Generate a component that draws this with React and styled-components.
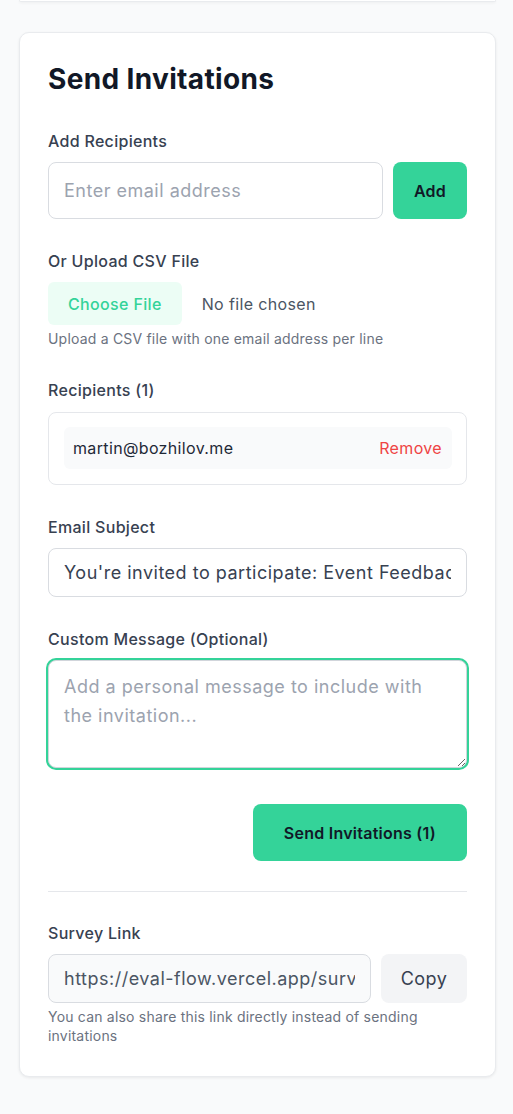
import React, { useState } from "react";
import styled, { createGlobalStyle } from "styled-components";

const GlobalStyle = createGlobalStyle`
  * { box-sizing: border-box; }
  body {
    margin: 0;
    background: #f9fafb;
    font-family: Inter, "Noto Sans", Arial, sans-serif;
    color: #111827;
  }
`;

const Page = styled.div`
  display: flex;
  flex-direction: column;
  padding: 0 17px 38px 19px;
`;

const PrevCard = styled.div`
  height: 2px;
  background: #fff;
  border: 1px solid #e9ebee;
  border-top: none;
  border-radius: 0 0 10px 10px;
  box-shadow: 0 1px 3px rgba(0, 0, 0, 0.06);
  margin-bottom: 30px;
`;

const Card = styled.div`
  background: #fff;
  border: 1px solid #e9ebee;
  border-radius: 10px;
  box-shadow: 0 1px 3px rgba(0, 0, 0, 0.07);
  padding: 28px 28px 31px;
  display: flex;
  flex-direction: column;
`;

const Title = styled.h2`
  margin: 0 0 32px;
  font-size: 28px;
  line-height: 36px;
  font-weight: 700;
  letter-spacing: 0.35px;
  color: #111827;
`;

const Section = styled.div`
  display: flex;
  flex-direction: column;
  margin-bottom: ${(p) => p.$mb ?? 30}px;
`;

const Label = styled.label`
  font-size: 16px;
  line-height: 24px;
  font-weight: 500;
  letter-spacing: 0.3px;
  color: #374151;
  margin-bottom: ${(p) => p.$mb ?? 9}px;
`;

const Row = styled.div`
  display: flex;
  gap: 10px;
`;

const TextInput = styled.input`
  flex: 1 1 auto;
  min-width: 0;
  height: ${(p) => p.$h || 49}px;
  padding: 0 15px;
  font-family: inherit;
  font-size: 18px;
  letter-spacing: 0.5px;
  color: ${(p) => (p.$muted ? "#4b5563" : "#374151")};
  background: ${(p) => (p.$muted ? "#f9fafb" : "#fff")};
  border: 1px solid #d9dce1;
  border-radius: 8px;
  outline: none;
  &::placeholder { color: #9ca3af; }
`;

const GreenButton = styled.button`
  height: ${(p) => p.$h || 57}px;
  padding: 0 ${(p) => p.$px || 22}px;
  background: #34d399;
  color: #111827;
  border: none;
  border-radius: 8px;
  font-family: inherit;
  font-size: 16px;
  font-weight: 600;
  letter-spacing: 0.25px;
  cursor: pointer;
`;

const GreyButton = styled.button`
  height: 49px;
  width: 86px;
  background: #f3f4f6;
  color: #374151;
  border: none;
  border-radius: 8px;
  font-family: inherit;
  font-size: 18px;
  letter-spacing: 0.5px;
  cursor: pointer;
`;

const FileInput = styled.input`
  font-family: inherit;
  font-size: 16px;
  letter-spacing: 0.35px;
  color: #4b5563;
  height: 43px;
  &::file-selector-button {
    height: 43px;
    padding: 0 20px;
    margin-right: 20px;
    background: #ecfdf5;
    color: #34d399;
    border: none;
    border-radius: 6px;
    font-family: inherit;
    font-size: 16px;
    font-weight: 500;
    letter-spacing: 0.35px;
    cursor: pointer;
  }
`;

const Hint = styled.p`
  margin: 4px 0 0;
  font-size: 14px;
  line-height: ${(p) => p.$lh || 20}px;
  letter-spacing: 0.2px;
  color: #6b7280;
`;

const ListBox = styled.div`
  border: 1px solid #e5e7eb;
  border-radius: 8px;
  padding: 14px 14px 15px 15px;
  display: flex;
  flex-direction: column;
  gap: 8px;
`;

const ListItem = styled.div`
  height: 42px;
  background: #f9fafb;
  border-radius: 6px;
  padding: 0 10px 0 9px;
  display: flex;
  align-items: center;
  justify-content: space-between;
  font-size: 16px;
  letter-spacing: 0.35px;
  color: #1f2937;
`;

const RemoveLink = styled.button`
  background: none;
  border: none;
  padding: 0;
  font-family: inherit;
  font-size: 16px;
  letter-spacing: 0.35px;
  color: #ef4444;
  cursor: pointer;
`;

const TextArea = styled.textarea`
  height: 108px;
  padding: 11px 15px;
  font-family: inherit;
  font-size: 18px;
  line-height: 29px;
  letter-spacing: 0.5px;
  color: #374151;
  border: 1px solid #d1d5db;
  border-radius: 8px;
  box-shadow: 0 0 0 2px #34d399;
  outline: none;
  resize: vertical;
  &::placeholder { color: #9ca3af; }
`;

const Actions = styled.div`
  display: flex;
  justify-content: flex-end;
  margin: 36px 0 30px;
`;

const Divider = styled.hr`
  border: none;
  border-top: 1px solid #e5e7eb;
  margin: 0 0 29px;
`;

export default function App() {
  const [recipients, setRecipients] = useState(["martin@bozhilov.me"]);
  const [email, setEmail] = useState("");

  const addRecipient = () => {
    if (email.trim()) {
      setRecipients([...recipients, email.trim()]);
      setEmail("");
    }
  };

  return (
    <>
      <GlobalStyle />
      <Page>
        <PrevCard />
        <Card>
          <Title>Send Invitations</Title>

          <Section>
            <Label>Add Recipients</Label>
            <Row>
              <TextInput
                $h={57}
                type="email"
                placeholder="Enter email address"
                value={email}
                onChange={(e) => setEmail(e.target.value)}
              />
              <GreenButton $px={21} onClick={addRecipient}>Add</GreenButton>
            </Row>
          </Section>

          <Section $mb={29}>
            <Label>Or Upload CSV File</Label>
            <FileInput type="file" accept=".csv" />
            <Hint>Upload a CSV file with one email address per line</Hint>
          </Section>

          <Section>
            <Label $mb={10}>Recipients ({recipients.length})</Label>
            <ListBox>
              {recipients.map((r, i) => (
                <ListItem key={r + i}>
                  <span>{r}</span>
                  <RemoveLink onClick={() => setRecipients(recipients.filter((_, j) => j !== i))}>
                    Remove
                  </RemoveLink>
                </ListItem>
              ))}
            </ListBox>
          </Section>

          <Section>
            <Label>Email Subject</Label>
            <TextInput type="text" defaultValue="You're invited to participate: Event Feedback Survey" />
          </Section>

          <Section $mb={0}>
            <Label $mb={9}>Custom Message (Optional)</Label>
            <TextArea autoFocus placeholder="Add a personal message to include with the invitation..." />
          </Section>

          <Actions>
            <GreenButton $px={31}>Send Invitations ({recipients.length})</GreenButton>
          </Actions>

          <Divider />

          <Section $mb={0}>
            <Label>Survey Link</Label>
            <Row>
              <TextInput $muted readOnly value="https://eval-flow.vercel.app/survey/event-feedback" />
              <GreyButton>Copy</GreyButton>
            </Row>
            <Hint $lh={19}>You can also share this link directly instead of sending invitations</Hint>
          </Section>
        </Card>
      </Page>
    </>
  );
}
